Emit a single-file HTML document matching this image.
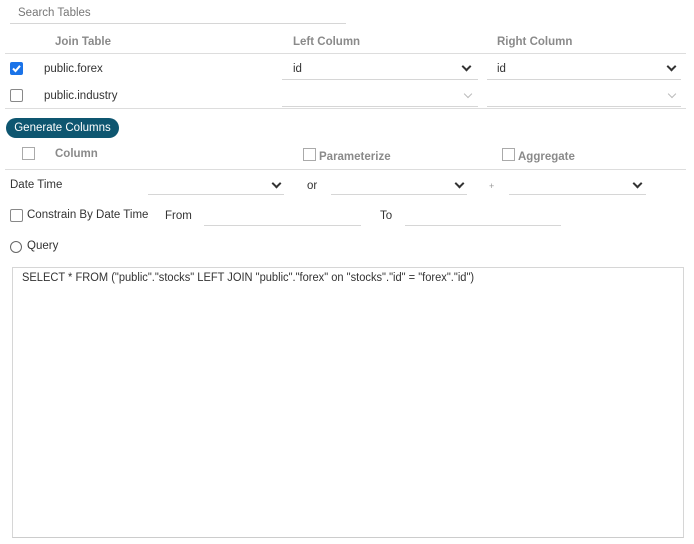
<!DOCTYPE html>
<html><head><style>
body{margin:0;width:694px;height:544px;background:#fff;position:relative;overflow:hidden;font-family:"Liberation Sans",Arial,sans-serif;font-size:11.5px;color:#333}
.a{position:absolute;white-space:nowrap}
.t{margin-top:1px}
.h{color:#8a8a8a;font-weight:bold}
.ln{position:absolute;height:1px;background:#ddd}
.ul{position:absolute;height:1px;background:#d6d6d6}
.cb{position:absolute;width:11px;height:11px;border:1px solid #888;border-radius:2px;background:#fff}
.cbl{position:absolute;width:11px;height:11px;border:1px solid #aaa;background:#fff}
.chev{position:absolute;width:5px;height:5px;border-right:2px solid #333;border-bottom:2px solid #333;transform:rotate(45deg)}
.chevl{position:absolute;width:5px;height:5px;border-right:1px solid #bbb;border-bottom:1px solid #bbb;transform:rotate(45deg)}
</style></head><body>
<div class="a t" style="left:18px;top:6px;color:#777">Search Tables</div>
<div class="ul" style="left:10px;top:23px;width:336px"></div>

<div class="a h t" style="left:55px;top:35px">Join Table</div>
<div class="a h t" style="left:293px;top:35px">Left Column</div>
<div class="a h t" style="left:497px;top:35px">Right Column</div>
<div class="ln" style="left:5px;top:53px;width:681px"></div>

<div style="position:absolute;left:10px;top:62px;width:13px;height:13px;background:#1a73e8;border-radius:2px"></div>
<svg class="a" style="left:10px;top:62px" width="13" height="13"><path d="M3 6.5 L5.5 9 L10 3.8" stroke="#fff" stroke-width="2" fill="none"/></svg>
<div class="a t" style="left:44px;top:62px">public.forex</div>
<div class="a t" style="left:293px;top:62px">id</div>
<div class="chev" style="left:463px;top:63px"></div>
<div class="ul" style="left:282px;top:79px;width:196px"></div>
<div class="a t" style="left:497px;top:62px">id</div>
<div class="chev" style="left:668px;top:63px"></div>
<div class="ul" style="left:487px;top:79px;width:194px"></div>

<div class="cb" style="left:10px;top:89px"></div>
<div class="a t" style="left:44px;top:89px">public.industry</div>
<div class="chevl" style="left:465px;top:91px"></div>
<div class="ul" style="left:282px;top:106px;width:196px"></div>
<div class="chevl" style="left:669px;top:91px"></div>
<div class="ul" style="left:487px;top:106px;width:194px"></div>
<div class="ln" style="left:5px;top:108px;width:681px"></div>

<div class="a" style="left:6px;top:118px;width:113px;height:20px;border-radius:10px;background:#0e5670;color:#fff;font-size:11.5px;line-height:20px;text-align:center">Generate Columns</div>

<div class="cbl" style="left:22px;top:147px"></div>
<div class="a h t" style="left:55px;top:147px">Column</div>
<div class="cbl" style="left:303px;top:148px"></div>
<div class="a h t" style="left:319px;top:150px">Parameterize</div>
<div class="cbl" style="left:502px;top:148px"></div>
<div class="a h t" style="left:518px;top:150px">Aggregate</div>
<div class="ln" style="left:5px;top:169px;width:681px"></div>

<div class="a t" style="left:10px;top:178px">Date Time</div>
<div class="chev" style="left:273px;top:180px"></div>
<div class="ul" style="left:148px;top:194px;width:136px"></div>
<div class="a t" style="left:307px;top:179px">or</div>
<div class="chev" style="left:456px;top:180px"></div>
<div class="ul" style="left:331px;top:194px;width:136px"></div>
<div class="a" style="left:489px;top:181px;color:#999;font-size:9px">+</div>
<div class="chev" style="left:634px;top:180px"></div>
<div class="ul" style="left:509px;top:194px;width:137px"></div>

<div class="cb" style="left:10px;top:209px;border-color:#888"></div>
<div class="a t" style="left:27px;top:208px">Constrain By Date Time</div>
<div class="a t" style="left:165px;top:209px">From</div>
<div class="ul" style="left:204px;top:225px;width:157px"></div>
<div class="a t" style="left:380px;top:209px">To</div>
<div class="ul" style="left:405px;top:225px;width:156px"></div>

<div class="a" style="left:10px;top:241px;width:10px;height:10px;border:1px solid #666;border-radius:50%"></div>
<div class="a t" style="left:27px;top:239px">Query</div>

<div class="a" style="left:12px;top:267px;width:670px;height:269px;border:1px solid #d6d6d6;border-bottom-color:#ccc"></div>
<div class="a t" style="left:22px;top:271px;transform:scaleX(0.965);transform-origin:left top">SELECT * FROM ("public"."stocks" LEFT JOIN "public"."forex" on "stocks"."id" = "forex"."id")</div>
</body></html>
